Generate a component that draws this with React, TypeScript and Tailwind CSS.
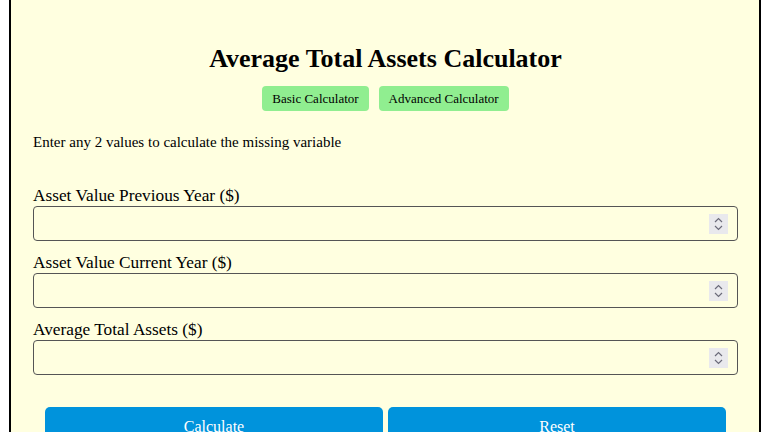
import { useState } from 'react'

const fields = [
  { id: 'prev', label: 'Asset Value Previous Year ($)' },
  { id: 'curr', label: 'Asset Value Current Year ($)' },
  { id: 'avg', label: 'Average Total Assets ($)' },
]

function Spinner() {
  return (
    <div className="pointer-events-none absolute right-[10px] top-1/2 flex h-[20px] w-[19px] -translate-y-1/2 flex-col items-center justify-center bg-[#e9e9ed]">
      <svg width="9" height="16" viewBox="0 0 9 16" fill="none" stroke="#6b6b7a" strokeWidth="1.2">
        <path d="M1 6 L4.5 2.5 L8 6" />
        <path d="M1 10 L4.5 13.5 L8 10" />
      </svg>
    </div>
  )
}

export default function App() {
  const [values, setValues] = useState<Record<string, string>>({ prev: '', curr: '', avg: '' })

  return (
    <div className="min-h-screen bg-white font-['Liberation_Serif',serif] text-black">
      <div className="ml-[9px] w-[752px] border-x-2 border-black bg-[#ffffe0] pl-[22px] pr-[21px] pt-[41px] pb-10">
        <h1 className="text-center text-[26px] font-bold leading-[36px]">Average Total Assets Calculator</h1>
        <div className="mt-[9px] flex justify-center gap-[10px]">
          <button className="h-[25px] rounded-[4px] bg-[#90ee90] px-[10px] text-[13px]">Basic Calculator</button>
          <button className="h-[25px] rounded-[4px] bg-[#90ee90] px-[10px] text-[13px]">Advanced Calculator</button>
        </div>
        <p className="mt-[21px] text-[15px] leading-[20px]">Enter any 2 values to calculate the missing variable</p>
        <div className="mt-[34px] flex flex-col gap-[12px]">
          {fields.map((f) => (
            <div key={f.id} className="flex flex-col">
              <label htmlFor={f.id} className="text-[17.3px] leading-[20px]">{f.label}</label>
              <div className="relative">
                <input
                  id={f.id}
                  type="text"
                  value={values[f.id]}
                  onChange={(e) => setValues({ ...values, [f.id]: e.target.value })}
                  className="block h-[35px] w-full rounded-[4px] border border-[#555] bg-transparent px-2 text-[16px] outline-none"
                />
                <Spinner />
              </div>
            </div>
          ))}
        </div>
        <div className="mx-[12px] mt-[32px] grid grid-cols-2 gap-[5px]">
          <button className="h-[40px] rounded-[5px] bg-[#0093dc] text-[16px] text-white">Calculate</button>
          <button className="h-[40px] rounded-[5px] bg-[#0093dc] text-[16px] text-white">Reset</button>
        </div>
      </div>
    </div>
  )
}
